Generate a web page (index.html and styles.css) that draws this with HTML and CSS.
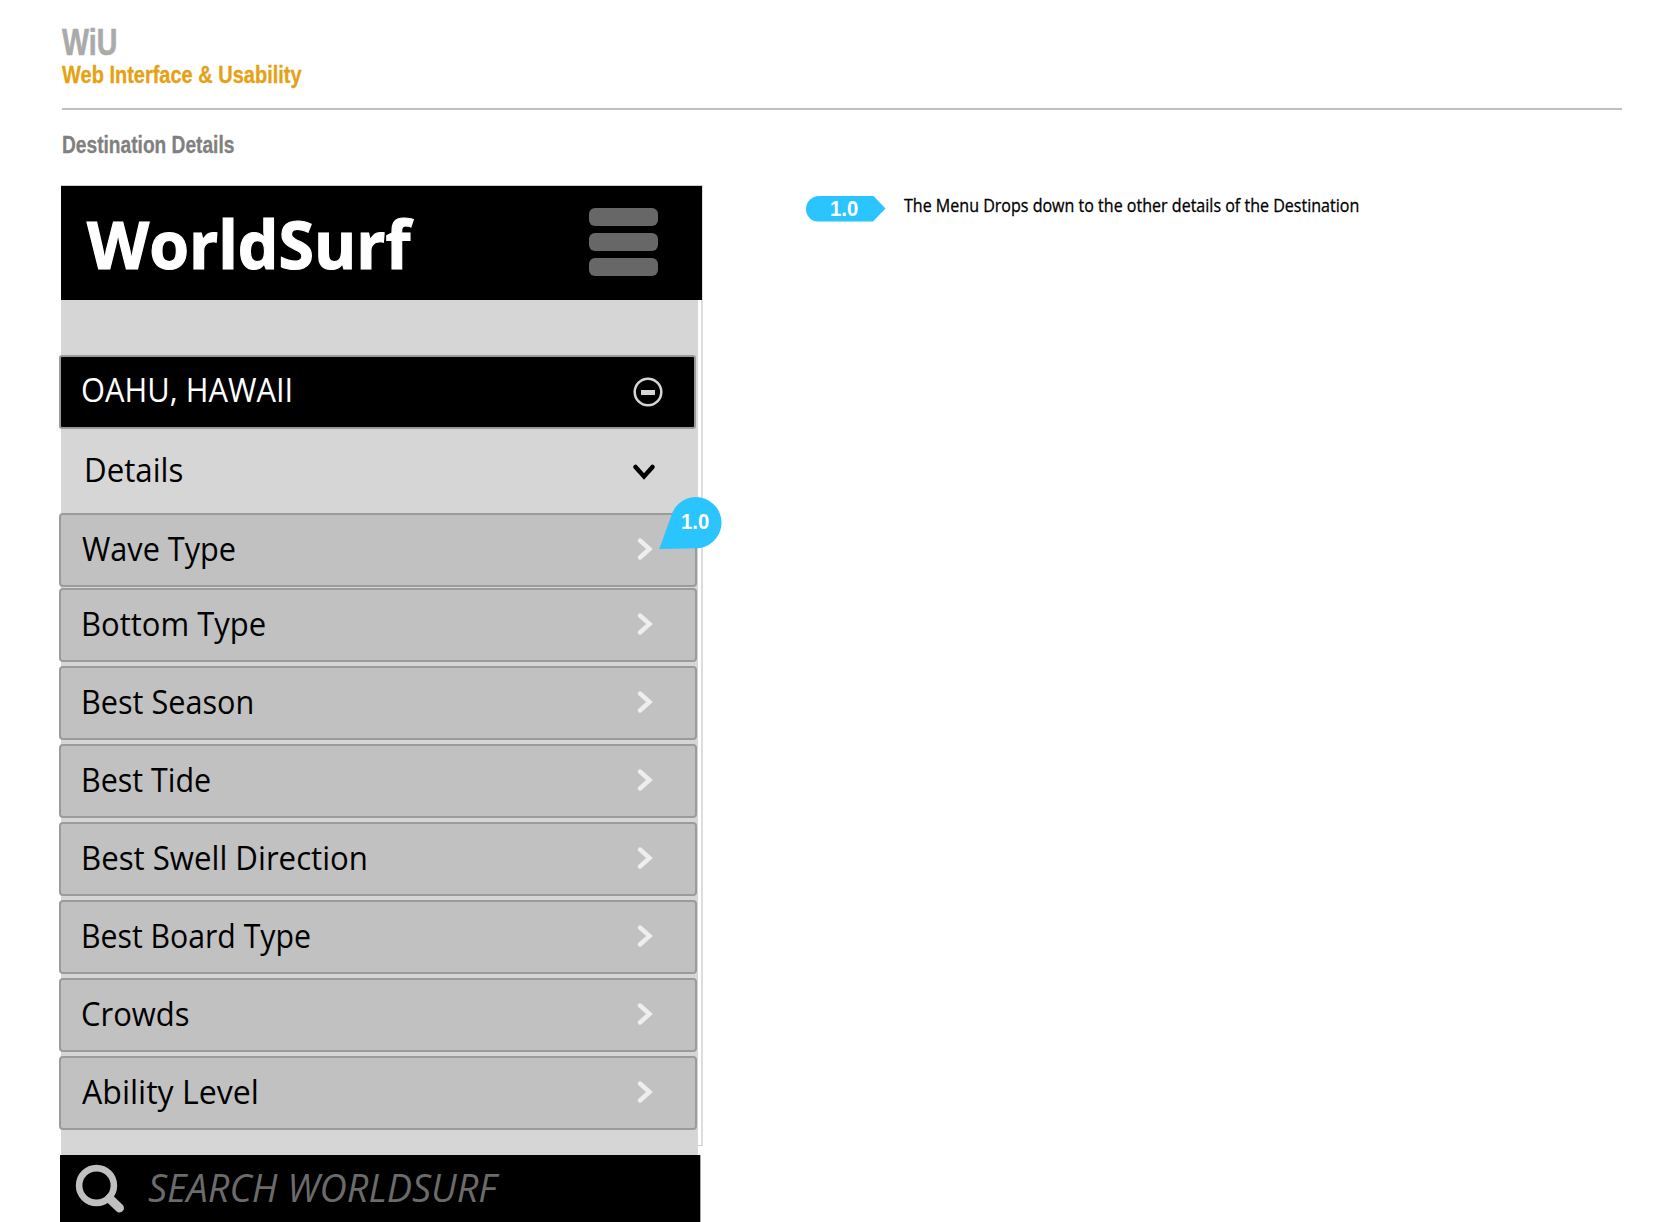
FILE: index.html
```
<!DOCTYPE html>
<html lang="en">
<head>
<meta charset="utf-8">
<title>WiU – Destination Details</title>
<link rel="stylesheet" href="styles.css">
</head>
<body>
<svg class="defs" aria-hidden="true">
  <symbol id="chevron" viewBox="0 0 20 26"><path d="M5 4.5 L14.5 13 L5 21.5"/></symbol>
</svg>
<header class="doc-head">
  <h1 class="brand"><span class="fit" style="--fit:.795">WiU</span></h1>
  <p class="tagline"><span class="fit" style="--fit:.833">Web Interface &amp; Usability</span></p>
</header>
<h2 class="page-title"><span class="fit" style="--fit:.815">Destination Details</span></h2>
<main class="board">
  <section class="phone">
    <div class="screen">
      <div class="topbar">
        <span class="logo fit" style="--fit:.96">WorldSurf</span>
        <div class="burger"><i></i><i></i><i></i></div>
      </div>
      <div class="content">
        <div class="place">
          <span class="label fit" style="--fit:.921">OAHU, HAWAII</span>
          <svg class="collapse" viewBox="0 0 30 30"><circle cx="15" cy="15" r="13.3"/><rect x="8" y="13" width="14" height="5"/></svg>
        </div>
        <div class="details">
          <span class="label fit" style="--fit:.932">Details</span>
          <svg class="down" viewBox="0 0 24 18"><path d="M3.5 4 L12 13.5 L20.5 4"/></svg>
        </div>
        <ul class="menu">
          <li class="row first"><span class="label flush fit" style="--fit:.915">Wave Type</span><svg class="go"><use href="#chevron"/></svg>
            <div class="pin">
              <svg viewBox="0 0 64 54"><path d="M1.3 53 L13.2 20 A25.6 25.6 0 1 1 37.5 52.3 Z"/></svg>
              <span class="num fit" style="--fit:.92">1.0</span>
            </div>
          </li>
          <li class="row"><span class="label fit" style="--fit:.925">Bottom Type</span><svg class="go"><use href="#chevron"/></svg></li>
          <li class="row"><span class="label fit" style="--fit:.914">Best Season</span><svg class="go"><use href="#chevron"/></svg></li>
          <li class="row"><span class="label fit" style="--fit:.908">Best Tide</span><svg class="go"><use href="#chevron"/></svg></li>
          <li class="row"><span class="label fit" style="--fit:.931">Best Swell Direction</span><svg class="go"><use href="#chevron"/></svg></li>
          <li class="row"><span class="label fit" style="--fit:.902">Best Board Type</span><svg class="go"><use href="#chevron"/></svg></li>
          <li class="row"><span class="label fit" style="--fit:.925">Crowds</span><svg class="go"><use href="#chevron"/></svg></li>
          <li class="row"><span class="label flush fit" style="--fit:.957">Ability Level</span><svg class="go"><use href="#chevron"/></svg></li>
        </ul>
      </div>
    </div>
    <div class="search">
      <svg class="glass" viewBox="0 0 50 50"><circle cx="21.5" cy="21.5" r="17.4"/><path d="M34.5 34.5 L44.5 44"/></svg>
      <span class="hint fit" style="--fit:.996">SEARCH WORLDSURF</span>
    </div>
  </section>
  <section class="legend">
    <div class="tag"><span class="num fit" style="--fit:.92">1.0</span></div>
    <p class="note"><span class="fit" style="--fit:.897">The Menu Drops down to the other details of the Destination</span></p>
  </section>
</main>
</body>
</html>
```
FILE: styles.css
```
* { box-sizing: border-box; margin: 0; padding: 0; }

body {
  height: 1222px;
  padding: 24px 0 0 62px;
  overflow: hidden;
  background: #fff;
  color: #000;
  font-family: "Open Sans", "Noto Sans", sans-serif;
}

.defs { position: absolute; width: 0; height: 0; }

/* Condensed lettering: the horizontal factor is set per string. */
.fit {
  display: inline-block;
  white-space: nowrap;
  transform: scaleX(var(--fit));
  transform-origin: 0 50%;
}

.brand, .tagline, .page-title, .num {
  font-family: "Liberation Sans", Arial, sans-serif;
  font-weight: bold;
}

.doc-head { width: 1560px; height: 86px; border-bottom: 2px solid #bfbfbf; }
.brand { height: 37px; font-size: 36px; line-height: 37px; color: #aaa; -webkit-text-stroke: .6px #aaa; }
.tagline { height: 28px; font-size: 24px; line-height: 28px; color: #e5a112; -webkit-text-stroke: .3px #e5a112; }
.page-title { height: 24px; margin-top: 23px; font-size: 23.5px; line-height: 24px; color: #808080; -webkit-text-stroke: .3px #808080; }

.board { display: flex; margin: 28px 0 0 -1px; }

/* Phone mock-up */
.phone { width: 745px; flex: none; }
.screen {
  width: 642px;
  height: 961px;
  border: solid #ccc;
  border-width: 1px 2px 1px 0;
  border-right-color: #ddd;
}
.topbar {
  display: flex;
  justify-content: space-between;
  align-items: center;
  width: 641px;
  height: 114px;
  padding: 0 44.5px 0 26px;
  background: #000;
}
.logo { font-size: 67px; line-height: 114px; font-weight: bold; color: #fff; -webkit-text-stroke: 1.2px #fff; }
.burger { display: grid; gap: 7px; width: 69px; padding-bottom: 2px; }
.burger i { height: 18.3px; border-radius: 6px; background: #676767; }

.content { width: 637px; height: 856px; padding-top: 55px; background: #d6d6d6; }
.label { font-size: 33.5px; line-height: 46px; }

.place, .details, .row { display: flex; justify-content: space-between; align-items: center; }
.place {
  width: 637px;
  height: 74px;
  margin-left: -2px;
  padding: 0 31px 0 20px;
  border: 2px solid #999;
  border-radius: 3px;
  background: #000;
  color: #fff;
}
.place .label { padding-bottom: 6px; line-height: 40px; }
.collapse { width: 30px; height: 30px; fill: #d6d6d6; }
.collapse circle { fill: none; stroke: #d6d6d6; stroke-width: 2.5; }

.details { height: 84px; padding: 0 42px 4px 22.5px; }
.down { width: 24px; height: 18px; margin-top: 5px; fill: none; stroke: #000; stroke-width: 4.5; stroke-linecap: round; }

.menu { display: grid; gap: 4px; width: 638px; margin-left: -2px; list-style: none; }
.row {
  position: relative;
  height: 74px;
  padding: 0 40px 3px 20px;
  border: 2px solid #9b9b9b;
  border-radius: 4px;
  background: #c1c1c1;
}
.row .label { padding-bottom: 2px; line-height: 44px; }
.first { margin-bottom: -3px; }
.flush { margin-left: .5px; }
.go { width: 20px; height: 26px; fill: none; stroke: #eee; stroke-width: 4.4; stroke-linecap: round; }

/* Callout laid over the first row */
.pin { position: absolute; z-index: 1; top: -19px; left: 596.5px; width: 64px; height: 54px; }
.pin svg { display: block; width: 64px; height: 54px; fill: #2ac4ff; }
.num { font-size: 22px; line-height: 26px; color: #fff; }
.pin .num { position: absolute; left: 23px; top: 13px; }

.search {
  display: flex;
  align-items: center;
  width: 641px;
  height: 67px;
  margin: 9px 0 0 -1px;
  padding: 0 0 4px 15px;
  border-right: 1px solid #aaa;
  background: #000;
}
.glass { width: 50px; height: 50px; margin-top: 4px; fill: none; stroke: #c0c0c0; stroke-width: 6.6; stroke-linecap: round; }
.glass path { stroke-width: 9; }
.hint { margin-left: 23px; font-size: 38px; line-height: 52px; font-style: italic; color: #6b6b6b; }

/* Annotation list */
.legend { display: flex; align-items: flex-start; padding-top: 10.5px; }
.tag {
  width: 79.5px;
  height: 26px;
  padding-left: 24px;
  border-radius: 13px 0 0 13px;
  background: #2ac4ff;
  clip-path: polygon(0 0, 67px 0, 100% 50%, 67px 100%, 0 100%);
}
.note { margin: -.5px 0 0 18.5px; font-size: 17.9px; line-height: 20px; -webkit-text-stroke: .3px #000; }
```
